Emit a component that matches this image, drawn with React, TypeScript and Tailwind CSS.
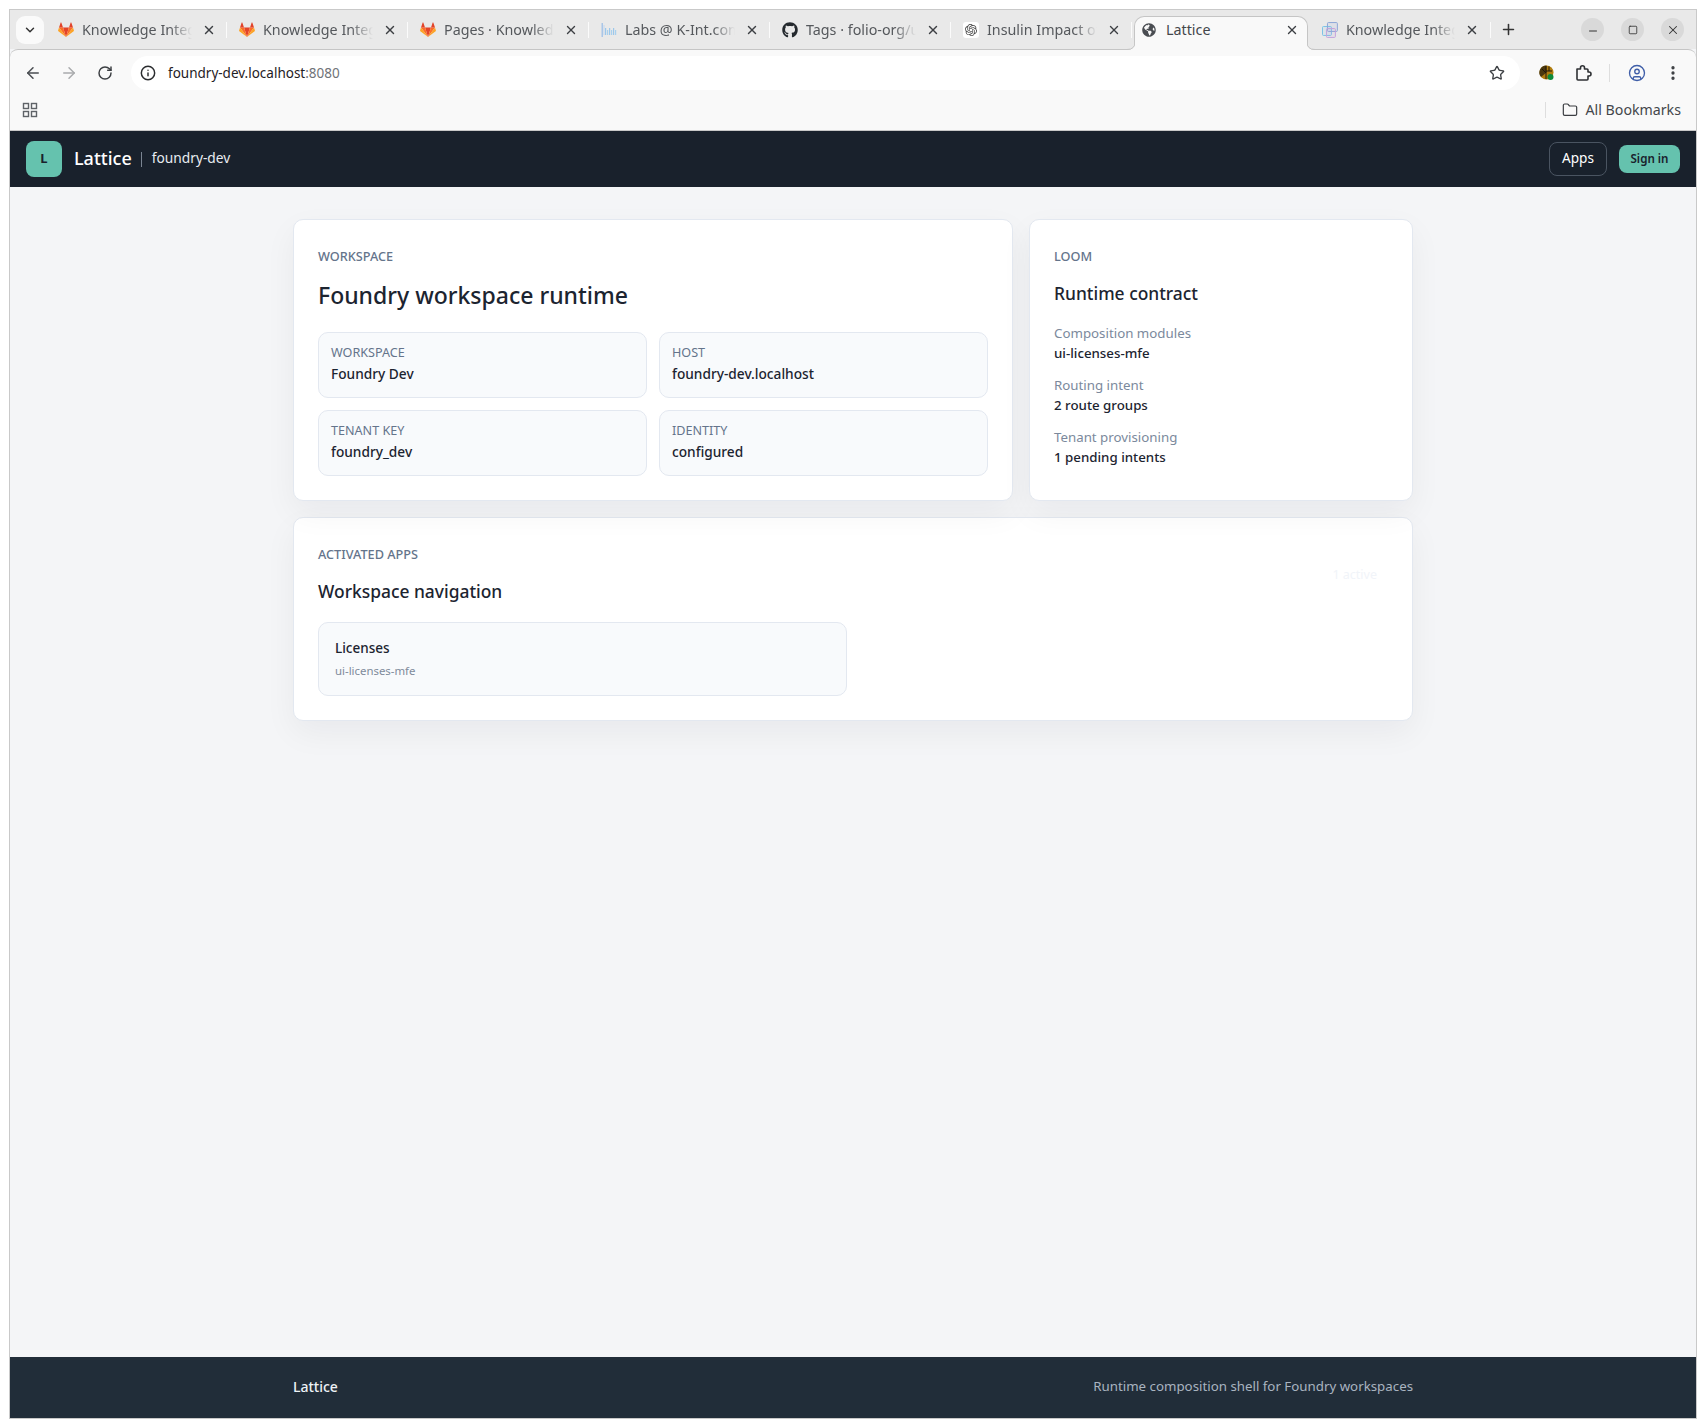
import { ArrowLeft, ArrowRight, RotateCw, Info, Star, CircleUser, EllipsisVertical, X, Plus, Minus, Square, ChevronDown, Folder } from 'lucide-react'
import { FaGithub, FaGlobeAmericas } from 'react-icons/fa'
import { SiOpenai } from 'react-icons/si'
import type { ReactNode } from 'react'

function GitlabIcon() {
     return (
          <svg className="w-4 h-4" viewBox="0 0 16 16">
               <path d="M8 15 L11 5.6 H5 Z" fill="#E24329" />
               <path d="M8 15 L5 5.6 H1 Z" fill="#FC6D26" />
               <path d="M8 15 L11 5.6 H15 Z" fill="#FC6D26" />
               <path d="M1 5.6 L0.1 8.4 Q0 9 0.4 9.3 L8 15 Z" fill="#FCA326" />
               <path d="M15 5.6 L15.9 8.4 Q16 9 15.6 9.3 L8 15 Z" fill="#FCA326" />
               <path d="M1 5.6 H5 L3.3 0.6 Q3 0.2 2.7 0.6 Z" fill="#E24329" />
               <path d="M15 5.6 H11 L12.7 0.6 Q13 0.2 13.3 0.6 Z" fill="#E24329" />
          </svg>
     )
}

function WaveIcon() {
     return (
          <svg className="w-4 h-4" viewBox="0 0 16 16">
               <rect x="0.5" y="1" width="1.5" height="14" fill="#a9c6e8" />
               <rect x="2.5" y="3" width="1" height="10" fill="#c5d8ee" />
               <rect x="4" y="6" width="1.2" height="7" fill="#9cc7ea" />
               <rect x="6" y="8" width="1.2" height="5" fill="#a8d0ee" />
               <rect x="8" y="6" width="1.2" height="7" fill="#9cc7ea" />
               <rect x="10" y="8" width="1.2" height="5" fill="#a8d0ee" />
               <rect x="12" y="6" width="1.2" height="7" fill="#9cc7ea" />
               <rect x="14" y="8" width="1.2" height="5" fill="#a8d0ee" />
          </svg>
     )
}

function SquaresIcon() {
     return (
          <svg className="w-4 h-4" viewBox="0 0 16 16" fill="none" strokeWidth="1">
               <rect x="0.5" y="4.5" width="9" height="9" rx="1" stroke="#7cc3e6" fill="#7cc3e622" />
               <rect x="5.5" y="0.5" width="10" height="9" rx="1" stroke="#8ca6d8" fill="#8ca6d822" />
               <rect x="4.5" y="6.5" width="9" height="9" rx="1" stroke="#c4a3dc" fill="#c4a3dc22" />
          </svg>
     )
}

function ExtensionBadge() {
     return (
          <svg className="w-[18px] h-[18px]" viewBox="0 0 18 18">
               <circle cx="8.5" cy="8.5" r="7" fill="#b07c0e" />
               <path d="M8.5 1.5 A7 7 0 0 0 3 13 L8.5 8.5 Z" fill="#4a370e" />
               <path d="M8 2 V15 M8 7 H14 M11 2.5 V7 M4 5 L8 9" stroke="#20180a" strokeWidth="1" fill="none" />
               <circle cx="12.5" cy="13" r="3" fill="#0d8a3a" />
          </svg>
     )
}

function PuzzleIcon() {
     return (
          <svg className="w-[18px] h-[18px] text-[#2f3134]" viewBox="0 0 18 18" fill="none" stroke="currentColor" strokeWidth="1.6" strokeLinejoin="round">
               <path d="M3 5 H6.5 V3.8 A2 2 0 0 1 10.5 3.8 V5 H13 Q14 5 14 6 V8 H15 A2 2 0 0 1 15 12 H14 V15 Q14 16 13 16 H4 Q3 16 3 15 Z" />
          </svg>
     )
}

function TabFlare({ side }: { side: 'left' | 'right' }) {
     return (
          <svg className={side === 'left' ? 'absolute -left-[8px] bottom-0 w-2 h-2' : 'absolute -right-[8px] bottom-0 w-2 h-2'} viewBox="0 0 8 8">
               {side === 'left' ? (
                    <>
                         <path d="M8 0 Q8 8 0 8 H8 Z" fill="#f9f9f9" />
                         <path d="M8 0 Q8 7.5 0 7.5" fill="none" stroke="#c5c5c5" />
                    </>
               ) : (
                    <>
                         <path d="M0 0 Q0 8 8 8 H0 Z" fill="#f9f9f9" />
                         <path d="M0 0 Q0 7.5 8 7.5" fill="none" stroke="#c5c5c5" />
                    </>
               )}
          </svg>
     )
}

function Tab({ icon, title }: { icon: ReactNode; title: string }) {
     return (
          <div className="w-[181px] shrink-0 flex items-center pl-[11px]">
               <span className="w-4 h-4 shrink-0 flex items-center justify-center">{icon}</span>
               <span className="ml-2 w-[110px] overflow-hidden whitespace-nowrap text-[14.3px] text-[#55585c] [mask-image:linear-gradient(to_right,black_80%,transparent)]">{title}</span>
               <X className="ml-[10px] w-[14px] h-[14px] text-[#3c3f43] shrink-0" strokeWidth={2.4} />
               <span className="ml-[10px] w-px h-[16px] bg-[#fbfbfb] shrink-0" />
          </div>
     )
}

function TabStrip() {
     return (
          <div className="h-[39px] bg-[#e9e9e9] flex items-center shrink-0">
               <div className="ml-[6px] mr-[3px] w-[28px] h-[28px] rounded-[9px] bg-[#fafafa] flex items-center justify-center">
                    <ChevronDown className="w-[14px] h-[14px] text-[#333]" strokeWidth={2.5} />
               </div>
               <Tab icon={<GitlabIcon />} title="Knowledge Integration" />
               <Tab icon={<GitlabIcon />} title="Knowledge Integration" />
               <Tab icon={<GitlabIcon />} title="Pages · Knowledge" />
               <Tab icon={<WaveIcon />} title="Labs @ K-Int.com" />
               <Tab icon={<FaGithub className="w-4 h-4 text-[#24292e]" />} title="Tags · folio-org/ui" />
               <Tab icon={<span className="w-4 h-4 bg-white rounded-[3px] flex items-center justify-center"><SiOpenai className="w-3 h-3 text-[#444]" /></span>} title="Insulin Impact of" />
               {/* active tab */}
               <div className="relative z-10 ml-px self-end h-[34px] -mb-px w-[174px] shrink-0 bg-[#f9f9f9] border border-b-0 border-[#c5c5c5] rounded-t-[10px] flex items-center pl-[7px] pb-[8px]">
                    <TabFlare side="left" />
                    <TabFlare side="right" />
                    <FaGlobeAmericas className="w-[14px] h-[14px] text-[#4a4d52] shrink-0" />
                    <span className="ml-[10px] w-[110px] text-[14.3px] text-[#44474b]">Lattice</span>
                    <X className="ml-[9px] w-[14px] h-[14px] text-[#3c3f43] shrink-0" strokeWidth={2.4} />
               </div>
               <div className="w-[183px] shrink-0 flex items-center pl-[14px]">
                    <SquaresIcon />
                    <span className="ml-2 w-[110px] overflow-hidden whitespace-nowrap text-[14.3px] text-[#55585c] [mask-image:linear-gradient(to_right,black_80%,transparent)]">Knowledge Integration</span>
                    <X className="ml-[10px] w-[14px] h-[14px] text-[#3c3f43] shrink-0" strokeWidth={2.4} />
                    <span className="ml-[11px] w-px h-[16px] bg-[#fbfbfb] shrink-0" />
               </div>
               <Plus className="ml-[9px] w-[17px] h-[17px] text-[#333]" strokeWidth={2.2} />
               <div className="ml-auto mr-[12px] flex items-center gap-[17px]">
                    <span className="w-[23px] h-[23px] rounded-full bg-[#d9d9d9] flex items-end justify-center pb-[4px]">
                         <Minus className="w-3 h-3 text-[#333]" />
                    </span>
                    <span className="w-[23px] h-[23px] rounded-full bg-[#d9d9d9] flex items-center justify-center">
                         <Square className="w-[10px] h-[10px] text-[#333]" strokeWidth={2} />
                    </span>
                    <span className="w-[23px] h-[23px] rounded-full bg-[#d9d9d9] flex items-center justify-center">
                         <X className="w-[14px] h-[14px] text-[#333]" strokeWidth={1.8} />
                    </span>
               </div>
          </div>
     )
}

function ToolButton({ children }: { children: ReactNode }) {
     return <div className="w-9 h-[34px] flex items-center justify-center">{children}</div>
}

function Toolbar() {
     return (
          <div className="h-[41px] pt-[6px] bg-[#f9f9f9] border-t border-[#c5c5c5] rounded-tl-[8px] rounded-tr-[8px] flex shrink-0">
               <div className="ml-[5px]"><ToolButton><ArrowLeft className="w-[18px] h-[18px] text-[#4a4d52]" strokeWidth={2} /></ToolButton></div>
               <ToolButton><ArrowRight className="w-[18px] h-[18px] text-[#a9abad]" strokeWidth={2} /></ToolButton>
               <ToolButton><RotateCw className="w-4 h-4 text-[#3c3f43]" strokeWidth={2.2} /></ToolButton>
               <div className="ml-[8px] flex-1 h-[34px] bg-white rounded-full flex items-center pl-[9px] pr-[15px]">
                    <Info className="w-4 h-4 text-[#2a2c2f]" strokeWidth={2.2} />
                    <span className="ml-[12px] text-[13.5px] text-[#1f2124]">foundry-dev.localhost<span className="text-[#6f7378]">:8080</span></span>
                    <Star className="ml-auto w-4 h-4 text-[#3c3f43]" strokeWidth={2} />
               </div>
               <div className="ml-[9px] mr-[5px] flex items-center">
                    <ToolButton><ExtensionBadge /></ToolButton>
                    <ToolButton><PuzzleIcon /></ToolButton>
                    <span className="ml-2 mr-[9px] w-px h-[18px] bg-[#dedede]" />
                    <ToolButton><CircleUser className="w-[18px] h-[18px] text-[#3f5ea8]" strokeWidth={1.8} /></ToolButton>
                    <ToolButton><EllipsisVertical className="w-[18px] h-[18px] text-[#3c3f43]" strokeWidth={2.4} /></ToolButton>
               </div>
          </div>
     )
}

function BookmarksBar() {
     return (
          <div className="h-[41px] bg-[#f9f9f9] border-b border-[#c8c8c8] flex items-center justify-between pl-[12px] pr-[15px] shrink-0">
               <svg className="w-4 h-4 text-[#5f6368]" viewBox="0 0 16 16" fill="none" stroke="currentColor" strokeWidth="1.4">
                    <rect x="1.5" y="1.5" width="5" height="5" />
                    <rect x="9.5" y="1.5" width="5" height="5" />
                    <rect x="1.5" y="9.5" width="5" height="5" />
                    <rect x="9.5" y="9.5" width="5" height="5" />
               </svg>
               <div className="flex items-center">
                    <span className="w-px h-[16px] bg-[#dedede] mr-[16px]" />
                    <Folder className="w-4 h-4 text-[#3c3f43]" strokeWidth={1.8} />
                    <span className="ml-2 text-[14.2px] text-[#44474b]">All Bookmarks</span>
               </div>
          </div>
     )
}

function Header() {
     return (
          <header className="h-[56px] bg-[#19212c] flex items-center justify-between px-4 shrink-0">
               <div className="flex items-center">
                    <div className="w-9 h-9 rounded-[8px] bg-[#65c2ae] flex items-center justify-center text-[13px] font-bold text-[#19212c]">L</div>
                    <span className="ml-3 pb-[2px] text-[18px] font-medium text-white">Lattice</span>
                    <span className="ml-[9px] w-px h-[15px] bg-[#7b8592]" />
                    <span className="ml-[10px] pb-px text-[13.75px] text-[#e8ecf1]">foundry-dev</span>
               </div>
               <div className="flex items-center gap-3">
                    <div className="w-[58px] h-[34px] pb-[2px] rounded-[8px] border border-[#4a5461] flex items-center justify-center text-[13.6px] text-white">Apps</div>
                    <div className="w-[61px] h-[28px] rounded-[8px] bg-[#65c2ae] flex items-center justify-center text-[11.6px] font-semibold text-[#19212c]">Sign in</div>
               </div>
          </header>
     )
}

function Eyebrow({ children }: { children: ReactNode }) {
     return <div className="text-[12.7px] leading-[24px] font-medium uppercase text-[#64748b]">{children}</div>
}

function Card({ className, children }: { className?: string; children: ReactNode }) {
     return <section className={'bg-white border border-[#e3e8f0] rounded-[10px] px-6 pt-6 pb-[24px] shadow-[0_12px_32px_rgba(15,23,42,0.05)] ' + (className ?? '')}>{children}</section>
}

const facts = [
     { label: 'Workspace', value: 'Foundry Dev' },
     { label: 'Host', value: 'foundry-dev.localhost' },
     { label: 'Tenant key', value: 'foundry_dev' },
     { label: 'Identity', value: 'configured' },
]

const contract = [
     { label: 'Composition modules', value: 'ui-licenses-mfe' },
     { label: 'Routing intent', value: '2 route groups' },
     { label: 'Tenant provisioning', value: '1 pending intents' },
]

export default function App() {
     return (
          <div className="h-[1428px] bg-white px-[9px] pt-[9px] pb-[9px] font-['Noto_Sans',sans-serif]">
               <div className="h-full border border-[#c9c9c9] flex flex-col overflow-hidden bg-[#f4f5f7]">
                    <TabStrip />
                    <Toolbar />
                    <BookmarksBar />
                    <Header />
                    <main className="flex-1 w-[1120px] mx-auto pt-8">
                         <div className="grid grid-cols-[720px_384px] gap-[16px]">
                              <Card>
                                   <Eyebrow>Workspace</Eyebrow>
                                   <h1 className="mt-[9px] text-[23px] leading-[36px] font-medium text-[#1c2430]">Foundry workspace runtime</h1>
                                   <div className="mt-[19px] grid grid-cols-2 gap-3">
                                        {facts.map((f) => (
                                             <div key={f.label} className="h-[66px] bg-[#f8fafc] border border-[#e3e8f0] rounded-[10px] px-3 pt-[10px]">
                                                  <div className="text-[12.6px] leading-[20px] uppercase text-[#64748b]">{f.label}</div>
                                                  <div className="mt-[1px] text-[13.7px] leading-[20px] font-medium text-[#1c2430]">{f.value}</div>
                                             </div>
                                        ))}
                                   </div>
                              </Card>
                              <Card>
                                   <Eyebrow>Loom</Eyebrow>
                                   <h2 className="mt-[11px] text-[17.4px] leading-[28px] font-medium text-[#1c2430]">Runtime contract</h2>
                                   <div className="mt-4 flex flex-col gap-3">
                                        {contract.map((c) => (
                                             <div key={c.label}>
                                                  <div className="text-[13.3px] leading-[20px] text-[#7b899c]">{c.label}</div>
                                                  <div className="text-[13.3px] leading-[20px] font-medium text-[#1c2430]">{c.value}</div>
                                             </div>
                                        ))}
                                   </div>
                              </Card>
                         </div>
                         <Card className="mt-[16px]">
                              <div className="flex items-center justify-between">
                                   <div>
                                        <Eyebrow>Activated apps</Eyebrow>
                                        <h2 className="mt-[11px] text-[17.4px] leading-[28px] font-medium text-[#1c2430]">Workspace navigation</h2>
                                   </div>
                                   <span className="mt-[3px] px-[11px] text-[12.5px] text-[#f1f4f9]">1 active</span>
                              </div>
                              <div className="mt-[17px] grid grid-cols-2 gap-3">
                                   <div className="h-[74px] bg-[#f8fafc] border border-[#e3e8f0] rounded-[10px] pl-4 pt-[15px]">
                                        <div className="text-[13.5px] leading-[20px] font-medium text-[#1c2430]">Licenses</div>
                                        <div className="mt-1 text-[11.4px] leading-[18px] text-[#7f8b9b]">ui-licenses-mfe</div>
                                   </div>
                              </div>
                         </Card>
                    </main>
                    <footer className="h-[61px] bg-[#212d39] shrink-0">
                         <div className="w-[1120px] mx-auto h-full pb-[2px] flex items-center justify-between">
                              <span className="text-[14px] leading-[20px] font-medium text-[#eef2f6]">Lattice</span>
                              <span className="text-[13.3px] text-[#a9b4c0]">Runtime composition shell for Foundry workspaces</span>
                         </div>
                    </footer>
               </div>
          </div>
     )
}
